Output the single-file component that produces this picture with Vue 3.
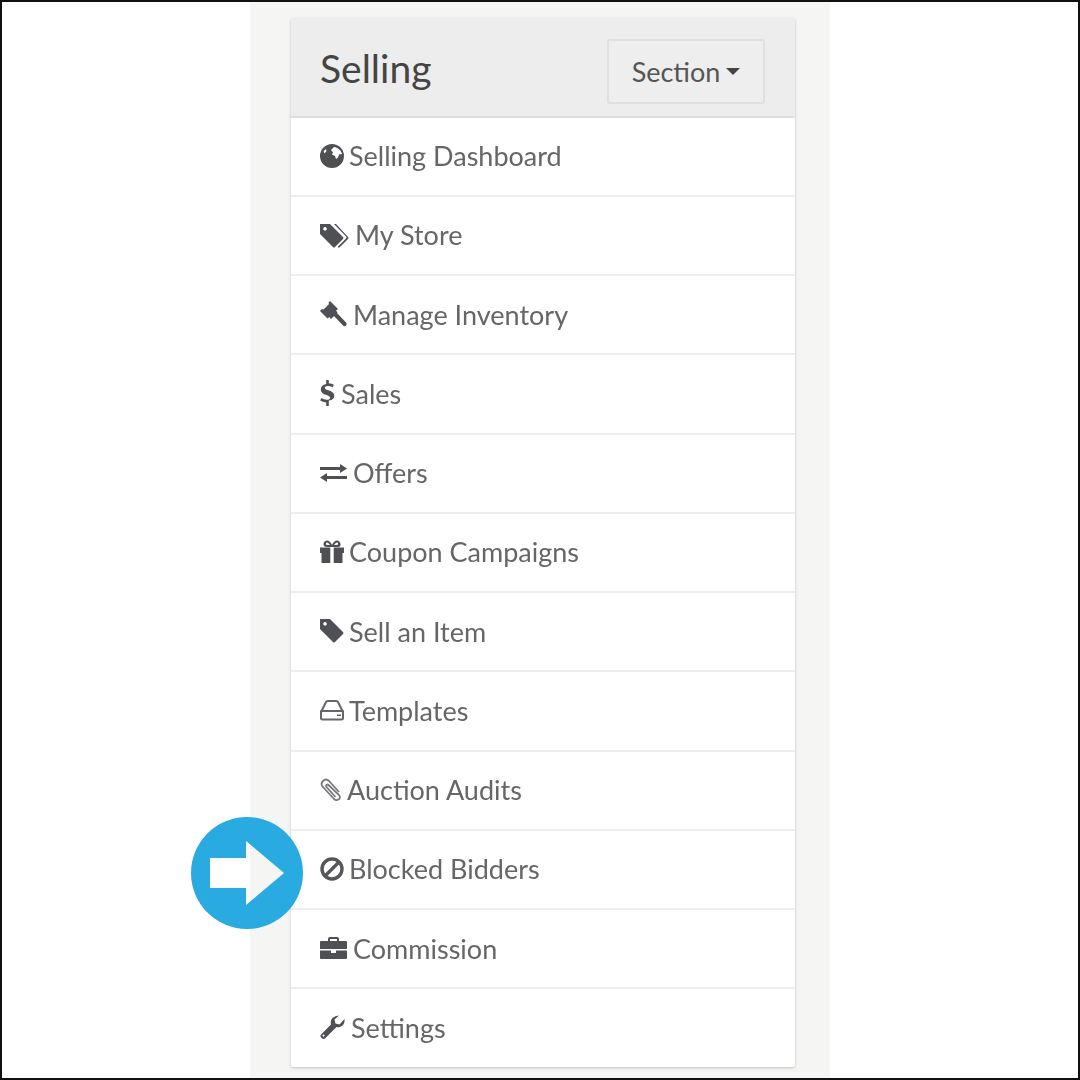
<template>
  <div class="frame">
    <div class="column">
      <div class="panel">
        <div class="panel-head">
          <h2 class="panel-title">Selling</h2>
          <button class="section-btn">Section<span class="caret"></span></button>
        </div>
        <div class="menu">
          <a v-for="item in items" :key="item.label" class="menu-row">
            <svg class="icon" :width="item.w" height="26" :viewBox="`0 0 ${item.w} 26`" v-html="item.svg"></svg>
            <span class="menu-label" :style="{ marginLeft: item.gap + 'px' }">{{ item.label }}</span>
          </a>
        </div>
      </div>
      <!-- arrow is cut out of the disc, background shows through -->
      <svg class="pointer" width="112" height="112" viewBox="0 0 112 112">
        <path fill="#29abe2" fill-rule="evenodd" d="M56 0a56 56 0 1 0 0 112a56 56 0 1 0 0-112zM19 41h36V24l38 32l-38 32V71H19z"/>
      </svg>
    </div>
  </div>
</template>

<script setup>
const items = [
  {
    label: 'Selling Dashboard', w: 24, gap: 5,
    svg: '<circle cx="12" cy="13" r="12"/><path fill="#fff" d="M14 4c4 .5 7 3 8 7l-3 .5-1 3-2 1.500-1-3-3-1.500 1-2-2-2.500zM3.500 8l2.500-2 .5 2-2 2.500z"/>'
  },
  {
    label: 'My Store', w: 29, gap: 6,
    svg: '<path fill-rule="evenodd" d="M0 2h10l13 13q1 1 0 2l-8 8q-1 1-2 0L0 12zM5 5a1.800 1.800 0 1 0 .01 0z"/><path d="M14 2h2l12 13q1 1 0 2l-8 8q-1 1-2.500 0l8.500-8.500q1-1 0-2z"/>'
  },
  {
    label: 'Manage Inventory', w: 27, gap: 6,
    svg: '<path d="M10 0l8 8-2 1.500 1.500 2L11 18l-1.500-2-2 1.500L0 10l2-2 1.500 .5 5.500-5.500-.5-1.500zM14 15l3-3 9.500 10q.5 1.500-.5 2.500t-2.500.5z"/>'
  },
  {
    label: 'Sales', w: 15, gap: 6,
    svg: '<path d="M6.200 0h2.600v3.200q3 .3 5 1.500l-1 2.500q-2.500-1.300-5-1.300-3 0-3 1.800 0 1.500 3.500 2.500 6 1.700 6 5.700 0 3.700-5.500 4.600V26H6.200v-3.400q-3.500-.3-6-2l1.200-2.500q2.500 1.700 5.300 1.700 3.300 0 3.300-2 0-1.600-3.700-2.700Q.8 13.400.8 9.500.8 5 6.200 3.900z"/>'
  },
  {
    label: 'Offers', w: 27, gap: 6,
    svg: '<path d="M0 7h20V4l7 4.500-7 4.500v-3H0zM27 16H7v-3l-7 4.500L7 22v-3h20z"/>'
  },
  {
    label: 'Coupon Campaigns', w: 24, gap: 5,
    svg: '<path fill-rule="evenodd" d="M0 8.500h24v5.500h-1.500v10h-21V14H0zM10.300 8.500v15.500h3.400V8.500zM7 8Q3.500 8 3.500 5T7 1.500q3 0 5 4.500 2-4.500 5-4.500t3.500 3.500-3.500 3zM6 4.500Q5.500 6 7.500 6H10Q8.500 3.500 7 3.500t-1 1zM18 4.500q.5 1.500-1.500 1.500H14q1.500-2.500 3-2.500t1 1z"/>'
  },
  {
    label: 'Sell an Item', w: 24, gap: 5,
    svg: '<path fill-rule="evenodd" d="M0 1h10l13 13q1 1 0 2l-8 8q-1 1-2 0L0 11zM5 4a1.800 1.800 0 1 0 .01 0z"/>'
  },
  {
    label: 'Templates', w: 24, gap: 5,
    svg: '<path fill="none" stroke="#66666b" stroke-width="2" stroke-linejoin="round" d="M1.500 14L6 5q.5-1 2-1h8q1.500 0 2 1l4.500 9M1 14h22v7q0 1.500-1.500 1.500h-19Q1 22.500 1 21z"/><path fill="#66666b" d="M17 17.500h4v1.500h-4z"/>'
  },
  {
    label: 'Auction Audits', w: 22, gap: 5,
    svg: '<path fill="none" stroke="#77777c" stroke-width="1.800" d="M19 15L9 4Q6 1 3 4t0 6l11 12q2 2 4.500.5t.5-4.500L8.500 8q-1-1-2 0t0 2l9 10"/>'
  },
  {
    label: 'Blocked Bidders', w: 24, gap: 5,
    svg: '<circle cx="12" cy="13" r="10" fill="none" stroke="#55555c" stroke-width="3.400"/><path fill="none" stroke="#55555c" stroke-width="3.400" d="M5 20L19 6"/>'
  },
  {
    label: 'Commission', w: 27, gap: 6,
    svg: '<path fill-rule="evenodd" d="M0 7q0-1 1-1h7V4q0-2 2-2h7q2 0 2 2v2h7q1 0 1 1v7H0zM10 4v2h7V4zM0 15.500h11v2.500h5v-2.500h11V23q0 1-1 1H1q-1 0-1-1z"/>'
  },
  {
    label: 'Settings', w: 25, gap: 6,
    svg: '<path fill-rule="evenodd" d="M24.500 5q.5 4-2 6.500t-6 1.500L5.500 24q-1.500 1.500-3.500.5T.5 21L11 10.500q-1-4 1.500-6.500T19 1.500l-4.500 4 1 4 4 1zM3.500 20.500a1 1 0 1 0 .01 0z"/>'
  }
]
</script>

<style scoped>
.frame {
  position: relative;
  box-sizing: border-box;
  width: 1080px;
  height: 1080px;
  border: 2px solid #111;
  background: #fff;
  display: flex;
  justify-content: center;
  overflow: hidden;
}
.column {
  width: 580px;
  height: 100%;
  box-sizing: border-box;
  padding: 16px 35px 11px 41px;
  background: #f5f5f4;
}
.panel {
  box-sizing: border-box;
  height: 1048.5px;
  display: flex;
  flex-direction: column;
  background: #fff;
  border-radius: 2px;
  box-shadow: 0 1px 3px rgba(0, 0, 0, 0.22);
  font-family: Lato, "Liberation Sans", sans-serif;
  filter: blur(0.45px);
}
.panel-head {
  height: 99.5px;
  flex-shrink: 0;
  box-sizing: border-box;
  display: flex;
  align-items: center;
  justify-content: space-between;
  padding: 0 30px 0 29px;
  background: #ededed;
  border-bottom: 2px solid #ddd;
}
.panel-title {
  margin: 2px 0 0;
  font-size: 39px;
  font-weight: 400;
  color: #444;
}
.section-btn {
  width: 158px;
  height: 65px;
  margin-top: 9px;
  padding: 0;
  display: flex;
  align-items: center;
  justify-content: center;
  background: #eee;
  border: 2px solid #e0e0e0;
  border-radius: 3px;
  font-family: inherit;
  font-size: 27px;
  color: #555;
}
.caret {
  width: 0;
  height: 0;
  margin-left: 6px;
  border-left: 7px solid transparent;
  border-right: 7px solid transparent;
  border-top: 7px solid #444;
}
.menu {
  flex: 1;
  display: flex;
  flex-direction: column;
}
.menu-row {
  flex: 1;
  box-sizing: border-box;
  display: flex;
  align-items: center;
  padding: 0 0 1px 29px;
  border-bottom: 2px solid #eee;
  color: #666;
  font-size: 27px;
}
.menu-row:last-child {
  border-bottom: 0;
}
.icon {
  flex-shrink: 0;
  fill: #4f4f56;
}
.pointer {
  position: absolute;
  left: 189px;
  top: 815px;
}
</style>

<style>
body {
  margin: 0;
}
</style>
